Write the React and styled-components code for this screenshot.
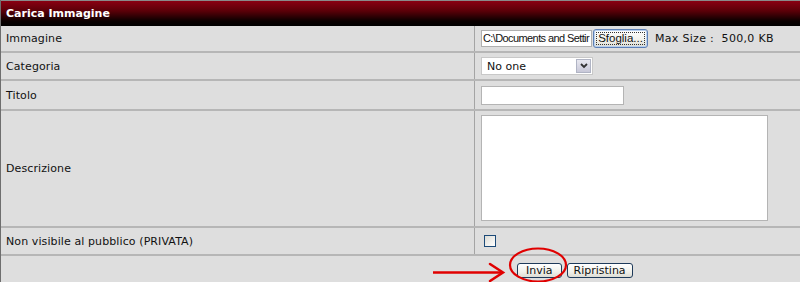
import styled, { createGlobalStyle } from "styled-components";

const Global = createGlobalStyle`
  html, body {
    margin: 0;
    padding: 0;
    background: #dedede;
  }
  body {
    font-family: "DejaVu Sans", Verdana, sans-serif;
    font-size: 11px;
    color: #111;
  }
`;

const Page = styled.div`
  position: relative;
  width: 800px;
  height: 282px;
  overflow: hidden;
  background: #dedede;
  border-left: 1px solid #6e6e6e;
  box-sizing: border-box;
`;

const Header = styled.div`
  height: 26px;
  box-sizing: border-box;
  border-top: 1px solid #8a8a8a;
  background: linear-gradient(#8a0012 0%, #5a0008 40%, #0a0000 80%, #000 100%);
  color: #fff;
  font-weight: bold;
  font-size: 11px;
  display: flex;
  align-items: center;
  padding-left: 5px;
`;

const Row = styled.div`
  display: grid;
  grid-template-columns: 473px 1fr;
  height: ${(p) => p.$h}px;
  box-sizing: border-box;
  border-bottom: 2px solid #b6b6b6;
`;

const Label = styled.div`
  display: flex;
  align-items: center;
  padding-left: 5px;
  letter-spacing: 0.1px;
`;

const Field = styled.div`
  display: flex;
  align-items: ${(p) => (p.$top ? "flex-start" : "center")};
  padding-left: 6px;
  padding-top: ${(p) => (p.$top ? 4 : 0)}px;
  border-left: 1px solid #a4a4a4;
  gap: 1px;
`;

const FileBox = styled.div`
  width: 111px;
  height: 17px;
  box-sizing: border-box;
  background: #fff;
  border: 1px solid #b0b0b0;
  font-family: "Liberation Sans", Tahoma, sans-serif;
  font-size: 11px;
  line-height: 15px;
  padding-left: 1px;
  white-space: nowrap;
  overflow: hidden;
  letter-spacing: -0.6px;
`;

const XpButton = styled.button`
  height: ${(p) => p.$h || 15}px;
  width: ${(p) => (p.$w ? `${p.$w}px` : "auto")};
  padding: 0 ${(p) => p.$px || 5}px;
  border: 1px solid ${(p) => (p.$focus ? "#5c7fb5" : "#1e3a5a")};
  border-radius: 3px;
  background: linear-gradient(#ffffff, #f0f0ea 60%, #dcdcd4);
  font-family: "DejaVu Sans", Verdana, sans-serif;
  font-size: 11px;
  color: #111;
  line-height: 1;
  display: inline-flex;
  align-items: center;
  justify-content: center;
  box-shadow: ${(p) => (p.$focus ? "inset 0 0 0 1px #b8d0f0" : "none")};
`;

const FocusText = styled.span`
  outline: 1px dotted #333;
  padding: 0 1px;
  font-family: "Liberation Sans", Tahoma, sans-serif;
  font-size: 11.5px;
`;

const MaxSize = styled.span`
  margin-left: 6px;
  font-size: 11px;
  white-space: pre;
  letter-spacing: 0.3px;
`;

const SelectBox = styled.div`
  width: 112px;
  height: 18px;
  box-sizing: border-box;
  background: #fff;
  border: 1px solid #c8c8c8;
  display: flex;
  align-items: center;
  justify-content: space-between;
  padding-left: 5px;
  padding-right: 1px;
`;

const Arrow = styled.span`
  width: 15px;
  height: 14px;
  background: linear-gradient(#e8e8f0, #c8c8d8);
  border: 1px solid #b0b4c4;
  box-sizing: border-box;
  display: flex;
  align-items: center;
  justify-content: center;
`;

const TextInput = styled.div`
  width: ${(p) => p.$w}px;
  height: ${(p) => p.$h}px;
  box-sizing: border-box;
  background: #fff;
  border: 1px solid #b4b4b4;
`;

const Check = styled.span`
  width: 12px;
  height: 12px;
  margin-left: 3px;
  box-sizing: border-box;
  border: 1px solid #1c4a78;
  background: linear-gradient(135deg, #dcdcd6, #fff);
`;

const Footer = styled.div`
  height: 26px;
  display: flex;
  align-items: center;
  gap: 5px;
  padding-left: 516px;
  padding-top: 2px;
  box-sizing: border-box;
`;

const Annot = styled.svg`
  position: absolute;
  left: 0;
  top: 0;
  pointer-events: none;
`;

export default function App() {
  return (
    <>
      <Global />
      <Page>
        <Header>Carica Immagine</Header>
        <Row $h={27}>
          <Label>Immagine</Label>
          <Field>
            <FileBox>C:\Documents and Settir</FileBox>
            <XpButton $focus $h={19} $w={55} $px={2}>
              <FocusText>Sfoglia...</FocusText>
            </XpButton>
            <MaxSize>Max Size :  500,0 KB</MaxSize>
          </Field>
        </Row>
        <Row $h={28}>
          <Label>Categoria</Label>
          <Field>
            <SelectBox>
              No one
              <Arrow>
                <svg width="8" height="6" viewBox="0 0 8 6">
                  <path d="M1 1 L4 4 L7 1" stroke="#333" strokeWidth="1.8" fill="none" />
                </svg>
              </Arrow>
            </SelectBox>
          </Field>
        </Row>
        <Row $h={30}>
          <Label>Titolo</Label>
          <Field>
            <TextInput $w={143} $h={19} />
          </Field>
        </Row>
        <Row $h={117}>
          <Label>Descrizione</Label>
          <Field $top>
            <TextInput $w={287} $h={106} />
          </Field>
        </Row>
        <Row $h={28}>
          <Label>Non visibile al pubblico (PRIVATA)</Label>
          <Field>
            <Check />
          </Field>
        </Row>
        <Footer>
          <XpButton $px={8}>Invia</XpButton>
          <XpButton $px={6}>Ripristina</XpButton>
        </Footer>
        <Annot width="800" height="282" viewBox="0 0 800 282">
          <ellipse cx="537" cy="265" rx="28" ry="16.5" fill="none" stroke="#e00000" strokeWidth="2.2" />
          <path d="M432 272.5 L502 272.5" stroke="#e00000" strokeWidth="2.5" fill="none" />
          <path d="M489 264 L502 272.5 L489 281" stroke="#e00000" strokeWidth="2.5" fill="none" strokeLinecap="round" />
        </Annot>
      </Page>
    </>
  );
}
